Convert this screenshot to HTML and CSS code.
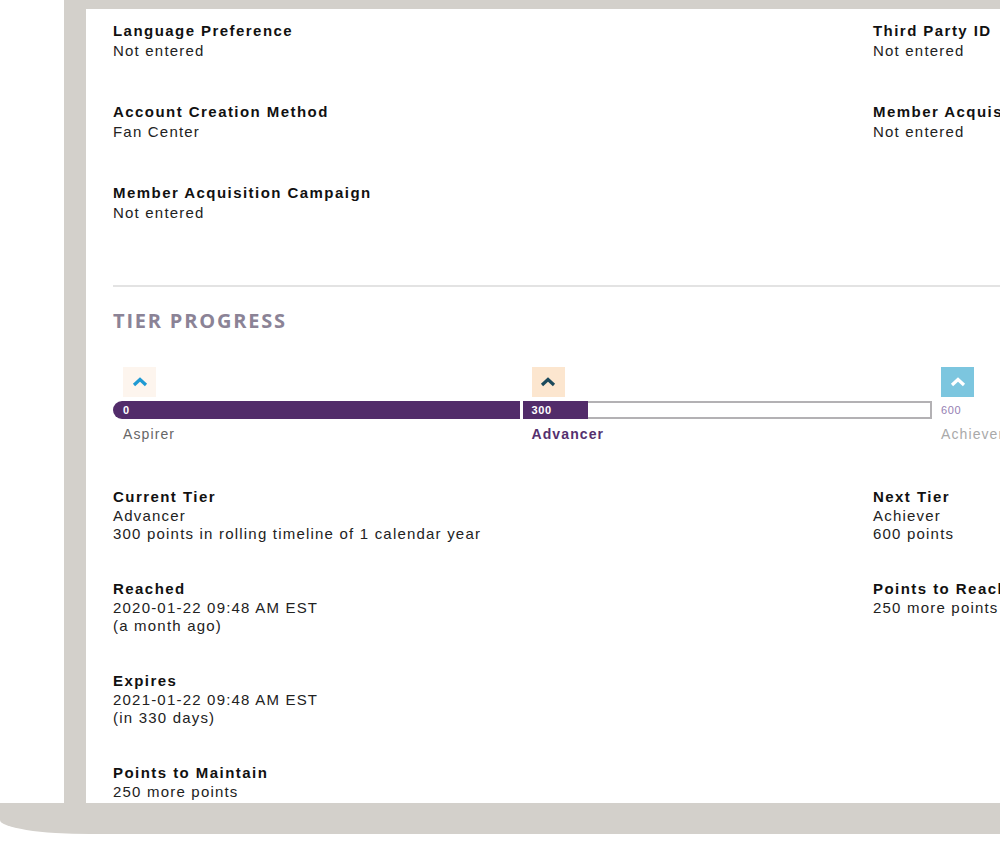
FILE: index.html
```html
<!DOCTYPE html>
<html lang="en">
<head>
<meta charset="utf-8">
<title>Tier Progress</title>
<link rel="stylesheet" href="styles.css">
</head>
<body>
<div class="device">
  <div class="panel">
    <div class="fields top-fields">
      <div class="field"><div class="label">Language Preference</div><div class="value">Not entered</div></div>
      <div class="field"><div class="label">Third Party ID</div><div class="value">Not entered</div></div>
      <div class="field"><div class="label">Account Creation Method</div><div class="value">Fan Center</div></div>
      <div class="field"><div class="label">Member Acquisition Source</div><div class="value">Not entered</div></div>
      <div class="field"><div class="label">Member Acquisition Campaign</div><div class="value">Not entered</div></div>
    </div>

    <hr class="divider">

    <h2 class="section-title">TIER PROGRESS</h2>

    <div class="tiers">
      <div class="tier tier-first">
        <div class="tier-icon icon-aspirer">
          <svg width="16" height="10" viewBox="0 0 16 10"><polyline points="2,8 8,2.5 14,8" fill="none" stroke="#1f9ad3" stroke-width="3.2"/></svg>
        </div>
        <div class="tier-bar bar-full"><span class="bar-num">0</span></div>
        <div class="tier-name">Aspirer</div>
      </div>
      <div class="tier tier-current">
        <div class="tier-icon icon-advancer">
          <svg width="16" height="10" viewBox="0 0 16 10"><polyline points="2,8 8,2.5 14,8" fill="none" stroke="#1c4a5c" stroke-width="3.2"/></svg>
        </div>
        <div class="tier-bar bar-partial"><div class="bar-fill" style="width: 16%"><span class="bar-num">300</span></div></div>
        <div class="tier-name current">Advancer</div>
      </div>
      <div class="tier tier-next">
        <div class="tier-icon icon-achiever">
          <svg width="16" height="10" viewBox="0 0 16 10"><polyline points="2,8 8,2.5 14,8" fill="none" stroke="#ffffff" stroke-width="3.2"/></svg>
        </div>
        <div class="tier-bar bar-empty"><span class="bar-num light">600</span></div>
        <div class="tier-name muted">Achiever</div>
      </div>
    </div>

    <div class="fields bottom-fields">
      <div class="field"><div class="label">Current Tier</div><div class="value">Advancer</div><div class="value">300 points in rolling timeline of 1 calendar year</div></div>
      <div class="field"><div class="label">Next Tier</div><div class="value">Achiever</div><div class="value">600 points</div></div>
      <div class="field"><div class="label">Reached</div><div class="value">2020-01-22 09:48 AM EST</div><div class="value">(a month ago)</div></div>
      <div class="field"><div class="label">Points to Reach</div><div class="value">250 more points</div></div>
      <div class="field"><div class="label">Expires</div><div class="value">2021-01-22 09:48 AM EST</div><div class="value">(in 330 days)</div></div>
      <div class="field"></div>
      <div class="field"><div class="label">Points to Maintain</div><div class="value">250 more points</div></div>
    </div>
  </div>
</div>
<div class="base"></div>
</body>
</html>
```

FILE: styles.css
```css
html, body {
  margin: 0;
  padding: 0;
  overflow: hidden;
  background: #ffffff;
  font-family: "Liberation Sans", Arial, sans-serif;
  color: #1a1a1a;
}

.device {
  margin-left: 64px;
  width: 1200px;
  height: 803px;
  box-sizing: border-box;
  padding: 9px 0 0 22px;
  background: #d3d0cb;
}

.panel {
  height: 794px;
  overflow: hidden;
  background: #ffffff;
  box-sizing: border-box;
  padding: 12px 0 0 27px;
}

.fields {
  display: grid;
  grid-template-columns: 760px 330px;
}

.top-fields {
  row-gap: 41px;
}

.top-fields .label,
.top-fields .value {
  line-height: 20px;
}

.bottom-fields {
  margin-top: 45px;
  row-gap: 36.5px;
}

.label {
  font-size: 15px;
  font-weight: 700;
  line-height: 18.5px;
  letter-spacing: 1.45px;
  color: #111111;
  white-space: nowrap;
}

.value {
  font-size: 15px;
  line-height: 18.5px;
  letter-spacing: 1.2px;
  color: #222222;
  white-space: nowrap;
}

.divider {
  margin: 62px 0 0 0;
  border: 0;
  height: 2px;
  background: #e3e3e3;
}

.section-title {
  margin: 20px 0 0 0;
  font-family: "Open Sans", sans-serif;
  font-size: 20px;
  line-height: 28px;
  font-weight: 700;
  letter-spacing: 1.8px;
  color: #8b8396;
}

.tiers {
  display: flex;
  margin-top: 32px;
}

.tier {
  width: 409.5px;
  flex: none;
}

.tier-icon {
  width: 33px;
  height: 30px;
  margin-left: 9px;
  display: flex;
  align-items: center;
  justify-content: center;
}

.tier-first .tier-icon {
  margin-left: 10px;
}

.icon-aspirer { background: #fdf5ee; }
.icon-advancer { background: #fce6cf; }
.icon-achiever { background: #7cc6df; }

.tier-bar {
  margin-top: 4px;
  height: 18px;
  display: flex;
  align-items: center;
  box-sizing: border-box;
}

.bar-full {
  background: #522c6a;
  border-radius: 9px 0 0 9px;
  margin-right: 3px;
  padding-left: 10px;
}

.bar-partial {
  box-shadow: inset 0 0 0 2px #b3b1b4;
}

.bar-fill {
  height: 100%;
  background: #522c6a;
  display: flex;
  align-items: center;
  padding-left: 9px;
  box-sizing: border-box;
}

.bar-empty {
  padding-left: 9px;
}

.bar-num {
  font-size: 11px;
  font-weight: 700;
  letter-spacing: 0.6px;
  color: #ffffff;
}

.bar-num.light {
  font-weight: 400;
  color: #9580b3;
}

.tier-name {
  margin-top: 6px;
  padding-left: 10px;
  font-size: 14px;
  line-height: 18px;
  letter-spacing: 1.1px;
  color: #666666;
}

.tier-current .tier-name,
.tier-next .tier-name {
  padding-left: 9px;
}

.tier-name.current {
  font-weight: 700;
  color: #55306e;
}

.tier-name.muted {
  color: #a9a9a9;
}

.base {
  width: 1000px;
  height: 31px;
  background: #d3d0cb;
  border-bottom-left-radius: 90px 14px;
}
```
